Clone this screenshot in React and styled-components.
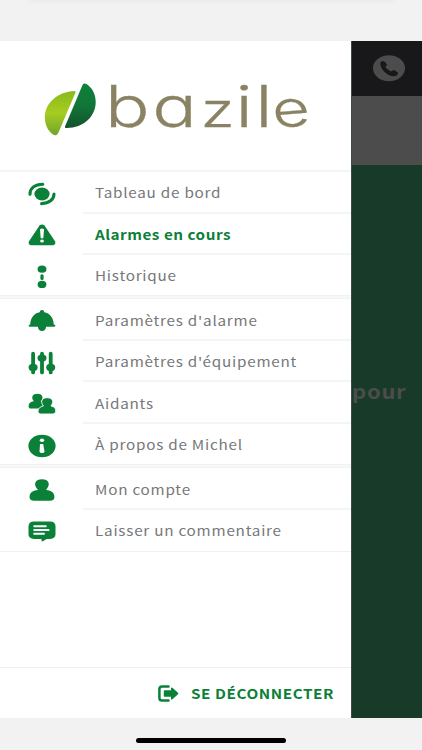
import React from 'react';
import styled, { createGlobalStyle } from 'styled-components';

const GREEN = '#0b8038';

const GlobalStyle = createGlobalStyle`
  * {
    box-sizing: border-box;
  }

  body {
    margin: 0;
    background: #f2f2f2;
    font-family: 'Noto Sans CJK JP', 'Noto Sans', sans-serif;
  }
`;

const Screen = styled.div`
  width: 422px;
  height: 750px;
  overflow: hidden;
  display: flex;
  flex-direction: column;
  background: #f2f2f2;
`;

const StatusArea = styled.div`
  height: 41px;
  flex: none;
  padding: 0 30px;
  overflow: hidden;
`;

const SheetEdge = styled.div`
  height: 1px;
  margin-top: -1px;
  background: #e9e9e9;
  box-shadow: 0 0 4px 1px #e4e4e4;
`;

const Body = styled.div`
  height: 677px;
  display: flex;
`;

const Drawer = styled.nav`
  width: 351px;
  flex: none;
  display: flex;
  flex-direction: column;
  background: #fff;
`;

const LogoArea = styled.div`
  height: 131px;
  flex: none;
  border-bottom: 2px solid #f3f4f4;

  svg {
    display: block;
  }
`;

const Group = styled.div`
  flex: none;
  height: ${({ $height }) => $height}px;
  overflow: hidden;
`;

const Separator = styled.div`
  height: 4px;
  flex: none;
  background: #f8f8f8;
  border-top: 1px solid #f1f2f2;
  border-bottom: 1px solid #f1f2f2;
`;

const EndLine = styled.div`
  height: 1px;
  flex: none;
  background: #eff0f0;
`;

const Row = styled.div`
  height: 41.5px;
  display: flex;
`;

const IconCell = styled.div`
  width: 83px;
  padding-top: ${({ $low }) => ($low ? 3 : 2)}px;
  display: flex;
  align-items: center;
  justify-content: center;
`;

const LabelCell = styled.div`
  flex: 1;
  padding: ${({ $low }) => ($low ? 2 : 1)}px 0 0 11.5px;
  display: flex;
  align-items: center;
  border-bottom: 2px solid #f4f5f5;

  ${Row}:last-child & {
    border-bottom-color: transparent;
  }
`;

const Label = styled.span`
  font-size: 13.5px;
  line-height: 20px;
  font-weight: ${({ $active }) => ($active ? 700 : 400)};
  letter-spacing: ${({ $active }) => ($active ? 0.45 : 0.67)}px;
  white-space: nowrap;
  color: ${({ $active }) => ($active ? GREEN : '#77787b')};
  transform: scaleX(1.13);
  transform-origin: left center;
`;

const Footer = styled.div`
  margin-top: auto;
  height: 51px;
  display: flex;
  align-items: center;
  padding-left: 158px;
  border-top: 1px solid #eeefef;
`;

const LogoutLabel = styled(Label)`
  margin-left: 12px;
  font-weight: 700;
  letter-spacing: 0.5px;
  color: ${GREEN};
`;

const Backdrop = styled.div`
  flex: 1;
  min-width: 0;
  overflow: hidden;
  border-left: 1px solid #3c4b43;
`;

const TopBar = styled.div`
  height: 55px;
  padding: 14px 0 0 21px;
  background: #18181a;

  svg {
    display: block;
  }
`;

const GreyBar = styled.div`
  height: 69px;
  background: #4c4c4c;
`;

const GreenArea = styled.div`
  height: 553px;
  padding-top: 213px;
  background: #183a28;
`;

const HiddenText = styled.div`
  font-size: 19px;
  line-height: 26px;
  font-weight: 700;
  letter-spacing: 0.6px;
  color: #4b4d4c;
  transform: scaleX(1.16);
  transform-origin: left center;
`;

const HomeArea = styled.div`
  flex: 1;
  padding: 20px 0 0 136px;
`;

const HomeIndicator = styled.div`
  width: 150px;
  height: 5px;
  border-radius: 3px;
  background: #000;
`;

const Icon = ({ children }) => (
  <svg width="28" height="24" viewBox="0 0 28 24" fill={GREEN}>
    {children}
  </svg>
);

const DashboardIcon = () => (
  <Icon>
    <ellipse cx="14" cy="12" rx="7.6" ry="6.4" />
    <path
      d="M2 12.2C2 6.2 7 2.5 14.8 2.3M26 12C26 17.6 21 21.4 13.6 21.6"
      fill="none"
      stroke={GREEN}
      strokeWidth="3.1"
      strokeLinecap="round"
    />
  </Icon>
);

const AlarmIcon = () => (
  <Icon>
    <path d="M11.5 2.6Q14 .2 16.5 2.6L27 18.2Q28.3 21.9 25 22.2H3Q-.3 21.9 1 18.2Z" />
    <path d="M12 6.2Q14 4.8 16 6.2L15.3 15.2H12.7Z" fill="#fff" />
    <ellipse cx="14" cy="18" rx="1.9" ry="1.5" fill="#fff" />
  </Icon>
);

const HistoryIcon = () => (
  <Icon>
    <ellipse cx="14" cy="4.2" rx="4.4" ry="3.6" />
    <rect x="12.4" y="9.2" width="3.2" height="5.8" rx="1.5" />
    <ellipse cx="14" cy="19.4" rx="4.4" ry="3.6" />
  </Icon>
);

const BellIcon = () => (
  <Icon>
    <path d="M11.7 3.2Q11.9 1 14 1T16.3 3.2C21.8 4.2 25.4 8.5 25.8 15.4Q27.6 15.6 27.4 16.7T25.8 17.7H18.1Q17.5 22 14 22T9.9 17.7H2.2Q.6 17.7.6 16.7T2.2 15.4C2.6 8.5 6.2 4.2 11.7 3.2Z" />
  </Icon>
);

const SlidersIcon = () => (
  <Icon>
    <path
      d="M5.1 2.7V21.4M14 2.7V21.4M22.7 2.7V21.4"
      stroke={GREEN}
      strokeWidth="3.8"
      strokeLinecap="round"
    />
    <ellipse cx="5.1" cy="16.4" rx="4.5" ry="3.6" />
    <ellipse cx="14" cy="7.1" rx="4.5" ry="3.6" />
    <ellipse cx="22.7" cy="16.4" rx="4.5" ry="3.6" />
  </Icon>
);

const PeopleIcon = () => (
  <Icon>
    <path d="M5.8 9.2C2.6 4.9 4.7 1.7 9.4 1.7C14 1.7 16.3 4.9 12.8 9.5C15.5 10.5 17.8 11.4 17.2 16.6H3Q.4 16.3.6 13.9C.6 11 2.6 9.9 5.8 9.2Z" />
    <path
      d="M15.4 14C11.6 9 14.4 5.7 19.3 5.7C24.2 5.7 26.6 9.2 23 14C26.4 14.8 28 16 27.7 19.4Q27.5 21.9 25 22H12.6Q10 21.9 10 19.4C10 16 12.2 14.8 15.4 14Z"
      stroke="#fff"
      strokeWidth="0.9"
    />
  </Icon>
);

const InfoIcon = () => (
  <Icon>
    <ellipse cx="14" cy="12" rx="13.6" ry="11.2" />
    <ellipse cx="14" cy="6.2" rx="2.2" ry="1.8" fill="#fff" />
    <path d="M12 10.1H15.2L16.5 17.5Q16.4 19.1 14 19.1T11.5 17.5Z" fill="#fff" />
  </Icon>
);

const UserIcon = () => (
  <Icon>
    <path d="M10 12C4.4 6 7.5 1.2 14 1.2S23.4 6 18 12C24 12.7 26.7 15 26.4 19.7Q26 22.6 22 22.7H6Q2 22.6 1.6 19.7C1.3 15 4 12.7 10 12Z" />
  </Icon>
);

const CommentIcon = () => (
  <Icon>
    <path d="M6 1.4H22Q27.5 1.6 27.5 6.2V14.2Q27.5 18.6 22 18.9H18.7L14.4 21.5Q13.4 21.6 13.4 18.9H6Q.5 18.6.5 14.2V6.2Q.5 1.6 6 1.4Z" />
    <path
      d="M6.2 6.3H17.8M6.2 10H20.6M6.2 13.8H16"
      stroke="#fff"
      strokeWidth="1.9"
      strokeLinecap="round"
    />
  </Icon>
);

const LogoutIcon = () => (
  <svg width="21" height="17" viewBox="0 0 21 17">
    <path
      d="M10.5 1.4H4.2Q1.4 1.4 1.4 4V13Q1.4 15.6 4.2 15.6H10.5"
      fill="none"
      stroke={GREEN}
      strokeWidth="2.5"
      strokeLinecap="round"
    />
    <path d="M6.6 5.2H13V3Q13.2 2 14.4 2.7L20 7.7Q20.7 8.5 20 9.2L14.4 14.2Q13.2 14.9 13 13.9V11.8H6.6Q5.8 11.7 5.8 11V6Q5.9 5.3 6.6 5.2Z" fill={GREEN} />
  </svg>
);

const PhoneIcon = () => (
  <svg width="32" height="27" viewBox="0 0 32 27">
    <ellipse cx="16" cy="13.3" rx="16" ry="13" fill="#4c4c4d" />
    <path
      d="M7.3 7.4Q9.5 5.4 11.4 6.4L14 9.3Q14.2 10.5 12.3 11.7Q13.6 14.5 18.6 16.5Q20.2 14.8 21.4 15.2L25 17.5Q25.2 20 22.2 21.1C15.5 22.3 6.3 13.8 7.3 7.4Z"
      fill="#18181a"
    />
  </svg>
);

const LogoText = styled.text`
  font-family: Inter, Lato, sans-serif;
  font-size: 57px;
  font-weight: 300;
  font-feature-settings: 'cv11';
  fill: #898263;
  stroke: #898263;
  stroke-width: 0.3px;
`;

const Logo = () => (
  <svg width="351" height="129" viewBox="0 41 351 129">
    <defs>
      <linearGradient id="leafLight" x1="0" y1="0" x2="0" y2="1">
        <stop offset="0" stopColor="#8bb91d" />
        <stop offset="0.5" stopColor="#a6cd20" />
        <stop offset="1" stopColor="#71a52b" />
      </linearGradient>
      <linearGradient id="leafDark" x1="0" y1="0" x2="0" y2="1">
        <stop offset="0" stopColor="#0d813b" />
        <stop offset="0.5" stopColor="#117638" />
        <stop offset="1" stopColor="#13522c" />
      </linearGradient>
    </defs>
    <path
      d="M74.5 91Q76 91 75.5 92.5L58.5 132.5Q57 136 54 135C49.5 132.5 44.8 126.5 44.8 117C44.8 103 58 91.5 74.5 91Z"
      fill="url(#leafLight)"
    />
    <path
      d="M82.5 85Q83.8 82.7 86.5 84C92 87.5 95.7 94 95.7 102C95.7 116.5 83.5 128.3 66 128Q64.5 128 65 126.5Z"
      fill="url(#leafDark)"
    />
    <LogoText transform="translate(0 127.2) scale(1.3 1)">
      <tspan x="80.8 117.2">ba</tspan>
      <tspan x="154.4" fontSize="48">z</tspan>
      <tspan x="181.2 196.4">il</tspan>
      <tspan x="211" y="0.8" rotate="-6" fontSize="50">e</tspan>
    </LogoText>
  </svg>
);

const groups = [
  {
    height: 123,
    items: [
      { label: 'Tableau de bord', icon: DashboardIcon },
      { label: 'Alarmes en cours', icon: AlarmIcon, active: true },
      { label: 'Historique', icon: HistoryIcon },
    ],
  },
  {
    height: 165,
    items: [
      { label: "Paramètres d'alarme", icon: BellIcon },
      { label: "Paramètres d'équipement", icon: SlidersIcon },
      { label: 'Aidants', icon: PeopleIcon },
      { label: 'À propos de Michel', icon: InfoIcon },
    ],
  },
  {
    height: 83,
    items: [
      { label: 'Mon compte', icon: UserIcon },
      { label: 'Laisser un commentaire', icon: CommentIcon },
    ],
  },
];

function App() {
  return (
    <>
      <GlobalStyle />
      <Screen>
        <StatusArea>
          <SheetEdge />
        </StatusArea>

        <Body>
          <Drawer>
            <LogoArea>
              <Logo />
            </LogoArea>

            {groups.map((group, index) => (
              <React.Fragment key={index}>
                {index > 0 && <Separator />}
                <Group $height={group.height}>
                  {group.items.map(({ label, icon: ItemIcon, active }) => (
                    <Row key={label}>
                      <IconCell $low={index > 0}>
                        <ItemIcon />
                      </IconCell>
                      <LabelCell $low={index > 0}>
                        <Label $active={active}>{label}</Label>
                      </LabelCell>
                    </Row>
                  ))}
                </Group>
              </React.Fragment>
            ))}
            <EndLine />

            <Footer>
              <LogoutIcon />
              <LogoutLabel>SE DÉCONNECTER</LogoutLabel>
            </Footer>
          </Drawer>

          <Backdrop>
            <TopBar>
              <PhoneIcon />
            </TopBar>
            <GreyBar />
            <GreenArea>
              <HiddenText>pour</HiddenText>
            </GreenArea>
          </Backdrop>
        </Body>

        <HomeArea>
          <HomeIndicator />
        </HomeArea>
      </Screen>
    </>
  );
}

export default App;
